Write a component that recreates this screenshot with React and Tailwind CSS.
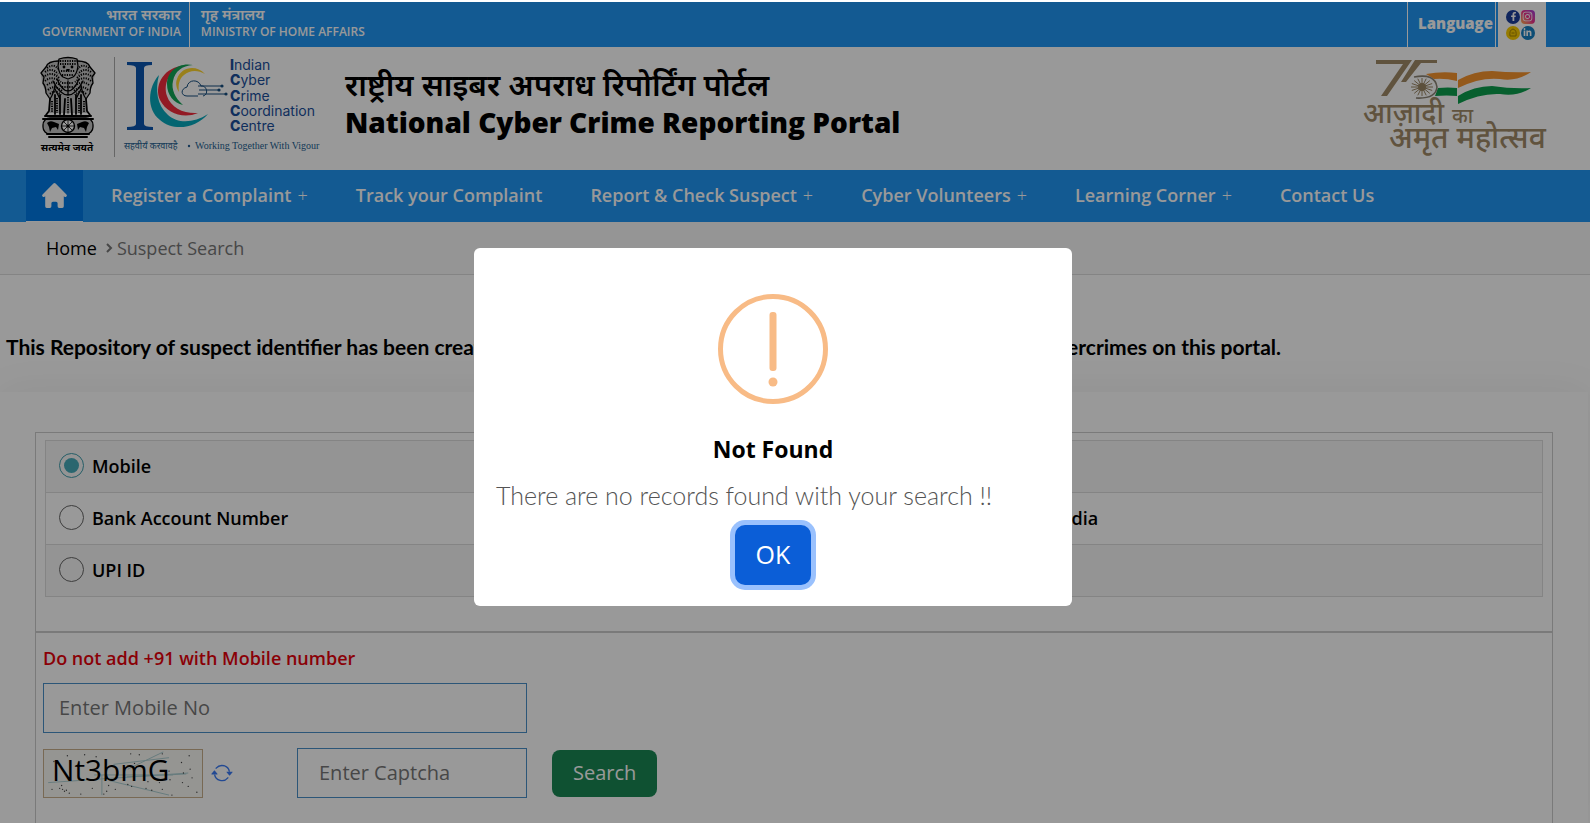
import { HiHome } from 'react-icons/hi';
import { BsArrowRepeat } from 'react-icons/bs';
import { FaFacebookF, FaInstagram, FaLinkedinIn } from 'react-icons/fa';

const NAV = [
  { label: 'Register a Complaint', more: true },
  { label: 'Track your Complaint', more: false },
  { label: 'Report & Check Suspect', more: true },
  { label: 'Cyber Volunteers', more: true },
  { label: 'Learning Corner', more: true },
  { label: 'Contact Us', more: false },
];

const OPTIONS = [
  [{ id: 'mobile', label: 'Mobile' }, { id: 'email', label: 'Email' }],
  [{ id: 'bank', label: 'Bank Account Number' }, { id: 'social', label: 'Social Media' }],
  [{ id: 'upi', label: 'UPI ID' }, null],
];

const SPECKS = [
  [22, 6], [40, 5], [52, 7], [34, 12], [88, 4], [97, 5], [92, 14], [121, 4], [149, 6], [141, 13], [150, 20],
  [152, 29], [142, 34], [148, 38], [129, 31], [118, 34], [6, 41], [14, 40], [17, 41], [19, 43], [21, 42], [24, 45],
  [48, 40], [63, 43], [65, 37], [72, 41], [85, 36], [89, 38], [106, 33], [110, 42], [121, 41], [131, 47], [157, 44],
  [104, 40], [16, 37], [36, 46], [60, 46], [8, 12], [128, 22], [143, 24],
];

function Emblem() {
  return (
    <svg viewBox="0 0 56 96" className="h-24 w-14 overflow-visible" role="img" aria-label="State Emblem of India">
      <g fill="#c4c4c4">
        <path d="M19 2 Q28 -1 37 2 L50 9 L55 16 L53 27 L49 37 L46 42 L47 56 H9 L10 42 L6 36 L2 26 L1 16 L6 9Z" />
        <rect x="3" y="61" width="50" height="16" rx="7" />
      </g>
      <g fill="none" stroke="#000" strokeWidth="1.3" strokeLinecap="round" strokeLinejoin="round">
        <path d="M19 2 Q28 -1 37 2 L38 9 Q37 17 33 20 L28 22 L23 20 Q19 17 18 9Z" />
        <path d="M19 4 Q8 4 6 10 L1 16 L4 20 L3 26 Q6 30 6 36 L10 42 Q14 36 15 28" />
        <path d="M37 4 Q48 4 50 10 L55 16 L52 20 L53 26 Q50 30 50 36 L46 42 Q42 36 41 28" />
        <path d="M10 42 L9 54 L6 58 M15 38 L15 57 M20 38 L20 57 M25 42 L24 58 M31 42 L32 58 M36 38 L36 57 M41 38 L41 57 M46 42 L47 54 L50 58" strokeWidth="1.8" />
        <path d="M5 59 H51 M3 62 H53 M7 77 H49 M9 80 H47" strokeWidth="2" />
        <rect x="3" y="61" width="50" height="16" rx="7" />
        <path d="M13 24 Q20 38 28 38 Q36 38 43 24 M17 22 Q22 34 28 34 Q34 34 39 22 M15 32 L20 42 M41 32 L36 42 M28 24 V38" />
      </g>
      <g fill="none" stroke="#000" strokeWidth="2" strokeDasharray="1.2 1.2">
        <path d="M7 11 Q14 6 18 12 M5 15 Q12 10 18 17 M5 19 Q12 14 19 21 M5 24 Q12 18 21 25 M7 28 Q14 22 22 30 M8 33 Q14 27 22 34 M10 37 Q15 32 21 38" />
        <path d="M49 11 Q42 6 38 12 M51 15 Q44 10 38 17 M51 19 Q44 14 37 21 M51 24 Q44 18 35 25 M49 28 Q42 22 34 30 M48 33 Q42 27 34 34 M46 37 Q41 32 35 38" />
        <path d="M20 4 H36 M20 7 H36 M21 14 H35 M22 18 H34 M22 26 H34 M22 30 H34 M12 44 V55 M17 41 V56 M39 41 V56 M44 44 V55 M28 40 V57" />
      </g>
      <g fill="#000">
        <circle cx="24" cy="10" r="1.4" /><circle cx="32" cy="10" r="1.4" /><path d="M26 12 H30 L28 15Z" />
        <path d="M7 66 Q10 63 14 65 L19 67 L18 73 L16 70 L12 71 L10 75 L9 70Z" />
        <path d="M49 66 Q46 63 42 65 L37 67 L38 73 L40 70 L44 71 L46 75 L47 70Z" />
      </g>
      <circle cx="28" cy="69" r="6.5" fill="#fff" stroke="#000" strokeWidth="1.4" />
      <path d="M28 63 V75 M22 69 H34 M24 65 L32 73 M32 65 L24 73" stroke="#000" strokeWidth=".8" />
      <circle cx="28" cy="69" r="1.6" />
      <text x="27" y="94" textAnchor="middle" fontSize="10" fontWeight="700" fontFamily="'Open Sans', 'Noto Sans', 'Noto Sans Devanagari', sans-serif">सत्यमेव जयते</text>
    </svg>
  );
}

function CoordinationCentreLogo() {
  const words = [['I', 'ndian'], ['C', 'yber'], ['C', 'rime'], ['C', 'oordination'], ['C', 'entre']];
  return (
    <svg viewBox="0 0 200 100" className="h-[100px] w-[200px] overflow-visible" role="img" aria-label="Indian Cyber Crime Coordination Centre">
      <path d="M3 5 H28 V8 Q20 8 20 11 V67 Q20 70 29 70 V73 H3 V70 Q12 70 12 67 V11 Q12 8 3 8Z" fill="#0d56b0" />
      <path d="M35 18 C24 30 22 52 36 63 C50 75 72 71 84 57 C70 66 54 67 44 58 C33 48 31 33 35 18Z" fill="#08a9bd" />
      <path d="M57 9 C38 12 30 30 36 43 C43 57 60 62 74 56 C60 57 47 51 43 39 C39 27 45 15 57 9Z" fill="#f42c3c" />
      <path d="M69 8 C55 5 43 14 43 27 C43 38 50 46 59 48 C51 41 47 32 49 24 C51 14 58 9 69 8Z" fill="#12a555" />
      <path d="M81 17 C72 7 57 10 53 22 C51 27 53 32 55 35 C54 28 55 22 60 18 C66 13 74 13 81 17Z" fill="#ffd52e" />
      <g fill="none" stroke="#174f80" strokeWidth="1">
        <path d="M74 39 H63 C57 39 56 32 63 30 C64 22 75 22 77 29 C83 28 85 38 79 39" />
        <path d="M74 29 H97 M75 33 H94 M74 37 H101" />
      </g>
      <g fill="#174f80"><circle cx="98" cy="29" r="1.6" /><circle cx="95" cy="33" r="1.6" /><circle cx="102" cy="37" r="1.6" /></g>
      <g fontFamily="Inter, sans-serif" fontSize="14" fill="#1b4f9c">
        {words.map(([head, rest], i) => (
          <text key={rest} x="106" y={13 + i * 15.3}><tspan fontWeight="800">{head}</tspan>{rest}</text>
        ))}
      </g>
      <text x="0" y="92" fontSize="9" fill="#255f92" fontFamily="'Noto Sans', sans-serif">सहवीर्यं करवावहै</text>
      <circle cx="65" cy="89" r="1.2" fill="#255f92" />
      <text x="71" y="92" fontSize="10" fill="#255f92" fontFamily="'Liberation Serif', serif">Working Together With Vigour</text>
    </svg>
  );
}

function AmritMahotsavLogo() {
  const rays = Array.from({ length: 16 }, (_, i) => (i * Math.PI) / 8);
  return (
    <svg viewBox="0 0 192 102" className="h-[102px] w-48 overflow-visible" role="img" aria-label="Azadi Ka Amrit Mahotsav">
      <path d="M14 3 H50 L25 39 L19 39 L41 7 H14Z M53 3 H75 V6 H59 L44 25 L39 25Z" fill="#a18a68" />
      <path d="M64 17 Q80 14 95 16 V24 Q83 21 72 22Z M96 23 Q112 14 130 14 Q150 16 169 15 Q155 25 138 22 Q118 20 96 31Z" fill="#f7942e" />
      <path d="M76 31 Q86 30 95 31 V39 Q85 38 73 39Z M96 39 Q112 29 130 29 Q150 32 169 31 Q155 40 138 37 Q118 36 96 47Z" fill="#0c9f4e" />
      <path d="M52 20 Q73 16 75 30 Q74 42 54 41" fill="none" stroke="#8c8475" strokeWidth="1.6" />
      <g stroke="#9a8663" strokeWidth="1">
        {rays.map((a) => (
          <path key={a} d={`M60 30 L${60 + 11 * Math.cos(a)} ${30 + 9 * Math.sin(a)}`} />
        ))}
      </g>
      <circle cx="60" cy="30" r="4" fill="#9a8663" />
      <g fill="#a18a68" fontFamily="'Noto Sans', 'Noto Sans Devanagari', sans-serif" fontWeight="500">
        <text x="1" y="66" fontSize="28">आज़ादी</text>
        <text x="90" y="66" fontSize="20">का</text>
        <text x="27" y="91" fontSize="30">अमृत महोत्सव</text>
      </g>
    </svg>
  );
}

function Captcha() {
  return (
    <svg viewBox="0 0 160 49" className="h-[49px] w-40 border border-[#c9b08c] bg-[#f8f8f4]" role="img" aria-label="Captcha">
      <g stroke="#a9cdd0" strokeWidth="1" fill="none">
        <path d="M2 34 L148 24 M85 20 L122 2 M58 26 V47 M66 32 L128 47 M50 26 H132 M70 15 L128 8 M84 28 L146 25" />
      </g>
      {SPECKS.map(([x, y]) => <circle key={`${x}-${y}`} cx={x} cy={y} r=".7" fill="#444" />)}
      <text x="6" y="32" fontSize="31" fontFamily="'Open Sans', sans-serif" fill="#000">Nt3bmG</text>
    </svg>
  );
}

function SocialIcons() {
  return (
    <a href="#social" aria-label="Social media" className="ml-0.5 grid w-12 grid-cols-2 content-center justify-center gap-x-px gap-y-0.5 bg-white pr-3 pl-2">
      <span className="flex size-3.5 items-center justify-center rounded-full bg-[#1b3f9c] text-white"><FaFacebookF size={9} /></span>
      <span className="flex size-3.5 items-center justify-center rounded bg-linear-to-tr from-[#ffb13b] via-[#f0308c] to-[#a035e0] text-white"><FaInstagram size={11} /></span>
      <span className="flex size-3.5 items-center justify-center rounded-full bg-[#facd00]">
        <svg viewBox="0 0 14 14" className="size-3.5" fill="none" stroke="#a88600" strokeWidth="1"><path d="M4 10 Q3 4 7 3 Q11 4 10 10Z M5.500 7 H8.500" /></svg>
      </span>
      <span className="flex size-3.5 items-center justify-center rounded-full bg-[#1681c4] text-white"><FaLinkedinIn size={9} /></span>
    </a>
  );
}

function Option({ id, label }) {
  return (
    <label htmlFor={id} className="flex items-center gap-2 pb-0.5 text-lg leading-6 font-semibold">
      <input
        id={id}
        type="radio"
        name="suspect"
        defaultChecked={id === 'mobile'}
        className="size-[25px] appearance-none rounded-full border border-[#666] bg-clip-content p-1 checked:border-[#3f9dac] checked:bg-[#46aaba]"
      />
      {label}
    </label>
  );
}

export default function App() {
  return (
    <div className="min-h-screen overflow-x-hidden bg-white pt-0.5 font-['Open_Sans','Noto_Sans','Noto_Sans_Devanagari',sans-serif] text-black">
      <header>
        <div className="flex h-[45px] justify-between bg-[#2196f3] pr-11 pl-[42px] text-white">
          <div className="flex text-xs font-semibold">
            <div className="flex flex-col border-r border-white pt-1 pr-2 text-right">
              <span className="text-[15px] leading-4">भारत सरकार</span>
              <span className="leading-5">GOVERNMENT OF INDIA</span>
            </div>
            <div className="flex flex-col pt-1 pl-[11px]">
              <span className="text-[15px] leading-4">गृह मंत्रालय</span>
              <span className="leading-5">MINISTRY OF HOME AFFAIRS</span>
            </div>
          </div>
          <div className="flex">
            <button type="button" className="border-x border-white pr-0.5 pb-0.5 pl-2.5 text-[15px] font-extrabold">Language</button>
            <SocialIcons />
          </div>
        </div>

        <div className="flex h-[123px] items-start justify-between pt-[10px] pr-9 pl-10">
          <div className="flex">
            <Emblem />
            <div className="ml-[18px] h-[100px] border-l border-[#aaa]" />
            <div className="ml-[9px]"><CoordinationCentreLogo /></div>
            <h1 className="ml-[21px] pt-[7px] text-[28px]">
              <span className="block text-[31px] leading-10 font-semibold">राष्ट्रीय साइबर अपराध रिपोर्टिंग पोर्टल</span>
              <span className="block leading-9 font-extrabold">National Cyber Crime Reporting Portal</span>
            </h1>
          </div>
          <AmritMahotsavLogo />
        </div>

        <nav className="flex h-[52px] bg-[#2196f3] pl-[26px] text-lg font-semibold text-white">
          <a href="#home" aria-label="Home" className="flex w-[57px] items-center justify-center border-b border-white bg-[#007be6]">
            <HiHome size={31} />
          </a>
          <div className="ml-1 flex items-center pb-0.5">
            {NAV.map((item) => (
              <a key={item.label} href="#nav" className="flex items-center gap-1.5 px-6 whitespace-nowrap">
                {item.label}
                {item.more && <span className="font-light">+</span>}
              </a>
            ))}
          </div>
        </nav>
      </header>

      <div className="flex h-[53px] items-center gap-2 border-b border-[#ddd] bg-[#f8f8f8] pl-[46px] text-lg">
        <a href="#home">Home</a>
        <svg viewBox="0 0 8 12" className="h-3 w-2" fill="none" stroke="#777" strokeWidth="2"><path d="M2 2 L6 6 L2 10" /></svg>
        <span className="-ml-1 text-[#777]">Suspect Search</span>
      </div>

      <p className="flex h-[117px] items-center gap-1.5 pt-[26px] pl-1.5 font-[Lato,sans-serif] text-[21px] font-bold whitespace-nowrap">
        <span>This Repository of suspect identifier has been created based on the information provided by</span>
        <span>citizens reporting cybercrimes on this portal.</span>
      </p>

      <main className="mr-0.5 h-[431px] overflow-hidden px-[35px] pt-10 shadow-[0_0_40px_rgba(0,0,0,0.06)]">
        <form className="h-full border border-b-0 border-[#ccc]">
          <div className="px-[9px] pt-[7px] pb-[34px]">
            <table className="w-full border-collapse border border-[#ddd]">
              <tbody>
                {OPTIONS.map(([left, right]) => (
                  <tr key={left.id} className="h-[52px] border border-[#ddd] odd:bg-[#f7f7f7]">
                    <td className="w-3/5 px-[13px]"><Option {...left} /></td>
                    <td className="px-[13px]">{right && <Option {...right} />}</td>
                  </tr>
                ))}
              </tbody>
            </table>
          </div>
          <div className="border-t-2 border-[#ccc] px-[7px] pt-[11px]">
            <label htmlFor="mobile-no" className="block text-lg leading-7 font-semibold text-red-600">Do not add +91 with Mobile number</label>
            <input id="mobile-no" placeholder="Enter Mobile No" className="mt-[11px] block h-[50px] w-[484px] border border-[#4a90c8] bg-transparent px-[15px] pb-0.5 text-xl placeholder:text-[#777]" />
            <div className="mt-[15px] flex items-center">
              <Captcha />
              <button type="button" aria-label="Refresh captcha" className="ml-2 text-[#3b7bf5]"><BsArrowRepeat size={22} /></button>
              <input aria-label="Captcha" placeholder="Enter Captcha" className="ml-16 h-[50px] w-[230px] border border-[#4a90c8] bg-transparent px-[21px] pb-0.5 text-xl placeholder:text-[#777]" />
              <button type="button" className="ml-[25px] h-[47px] rounded-lg bg-[#198754] px-[21px] text-xl text-white">Search</button>
            </div>
          </div>
        </form>
      </main>

      <div className="fixed inset-x-0 top-0.5 bottom-0 flex items-center justify-center bg-black/40 pt-[29px] pr-11">
        <div role="dialog" aria-modal="true" aria-labelledby="dialog-title" className="flex w-[598px] flex-col items-center rounded-md bg-white px-[22px] pt-[46px] pb-[21px]">
          <svg viewBox="0 0 110 110" className="size-[110px]" aria-hidden="true">
            <circle cx="55" cy="55" r="52.5" fill="none" stroke="#f8bb86" strokeWidth="5" />
            <rect x="51.5" y="18" width="7" height="59" rx="3" fill="#f8bb86" />
            <circle cx="55" cy="88" r="4.5" fill="#f8bb86" />
          </svg>
          <h2 id="dialog-title" className="mt-[29px] text-[23px] leading-8 font-bold">Not Found</h2>
          <p className="mt-3 self-start font-[Lato,sans-serif] text-[25px] leading-9 font-light text-[#545454]">There are no records found with your search !!</p>
          <button type="button" className="mt-3 h-[60px] rounded-[10px] bg-[#0b5ed7] px-[21px] text-[25px] text-white ring-5 ring-[#9ac1fd]">OK</button>
        </div>
      </div>
    </div>
  );
}
